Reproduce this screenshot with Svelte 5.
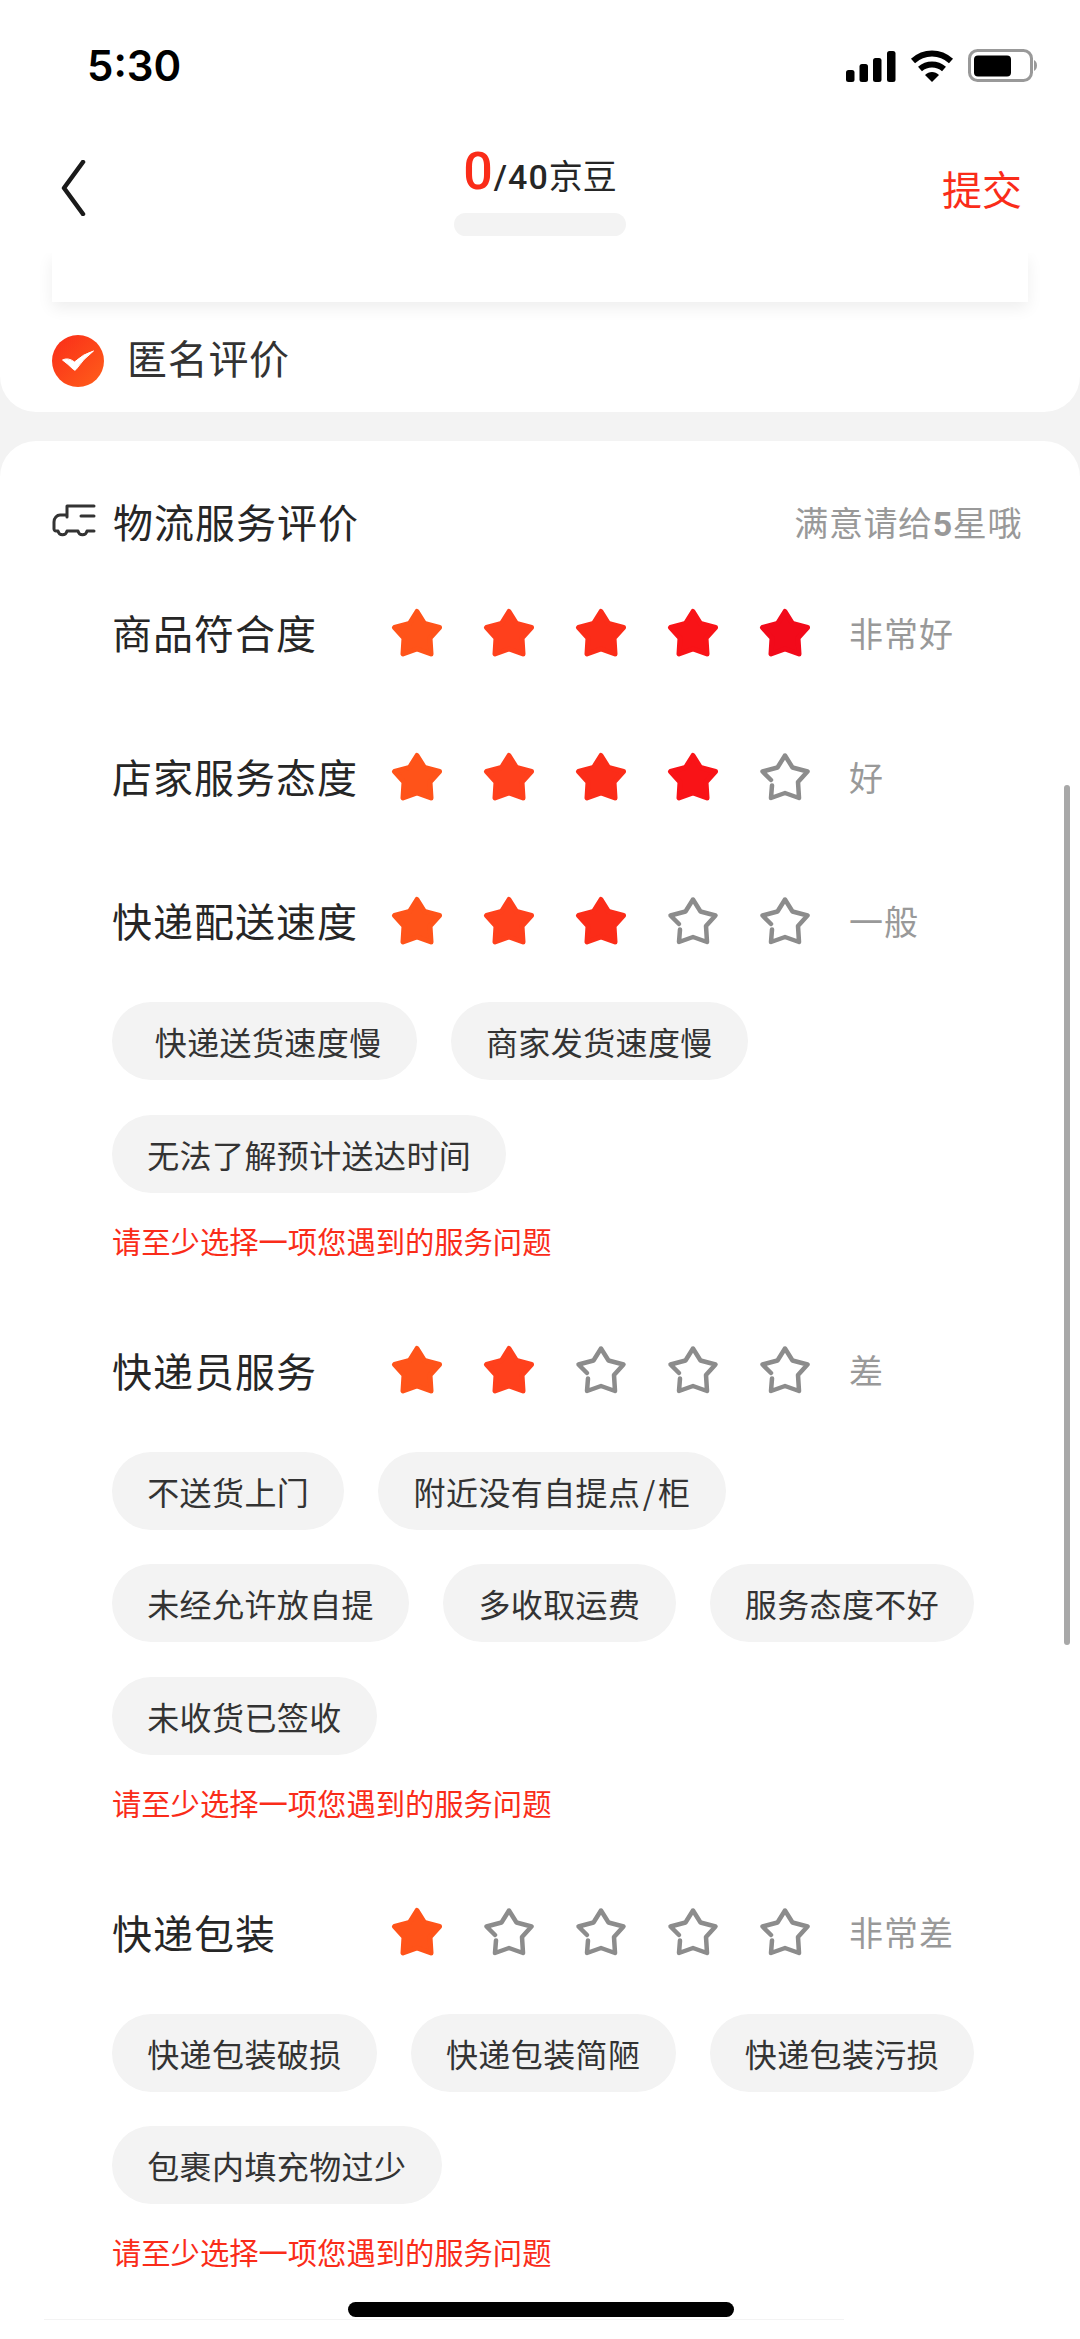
<script>
  const rows = [
    { label: "商品符合度", stars: 5, note: "非常好" },
    { label: "店家服务态度", stars: 4, note: "好" },
    {
      label: "快递配送速度",
      stars: 3,
      note: "一般",
      tags: ["\u00a0快递送货速度慢", "商家发货速度慢", "无法了解预计送达时间"],
    },
    {
      label: "快递员服务",
      stars: 2,
      note: "差",
      tags: ["不送货上门", "附近没有自提点\u200a/\u200a柜", "未经允许放自提", "多收取运费", "服务态度不好", "未收货已签收"],
    },
    {
      label: "快递包装",
      stars: 1,
      note: "非常差",
      tags: ["快递包装破损", "快递包装简陋", "快递包装污损", "包裹内填充物过少"],
    },
  ];
  const starColors = ["#ff5319", "#ff401c", "#fb2c18", "#f91317", "#f20a1a"];
  const starFilled = "M26 3.5 L33.5 15.5 L48.5 19.5 L39 30 L40 46 L26 41 L12 46 L13 30 L3.5 19.5 L18.5 15.5 Z";
  // the outline star has a small break on its lower left
  const starOutline = "M13 33.5 L12 46 L26 41 L40 46 L39 30 L48.5 19.5 L33.5 15.5 L26 3.5 L18.5 15.5 L3.5 19.5 L12 28";
</script>

<div class="page">
  <header class="top">
    <div class="status">
      <span class="time">5:30</span>
      <div class="status-icons">
        <svg width="50" height="32" viewBox="0 0 50 32">
          <rect x="0" y="20" width="8.5" height="12" rx="2.5" />
          <rect x="13.5" y="14" width="8.5" height="18" rx="2.5" />
          <rect x="27" y="8" width="8.5" height="24" rx="2.5" />
          <rect x="41" y="1" width="8.5" height="31" rx="2.5" />
        </svg>
        <svg width="44" height="34" viewBox="0 0 44 34">
          <path d="M3 12 C14 2 30 2 41 12" fill="none" stroke="#000" stroke-width="6" stroke-linejoin="round" />
          <path d="M10 20 C17 14 27 14 34 20" fill="none" stroke="#000" stroke-width="6" />
          <path d="M15 26 C19 22 25 22 29 26 L22 33 Z" />
        </svg>
        <svg width="70" height="34" viewBox="0 0 70 34">
          <rect x="1.5" y="1.5" width="62" height="30" rx="8" fill="none" stroke="#999" stroke-width="3" />
          <rect x="6" y="6.5" width="37" height="21" rx="4" />
          <path d="M66 11 C70 13 70 20 66 22 Z" fill="#999" />
        </svg>
      </div>
    </div>
    <nav class="nav">
      <svg class="back" width="26" height="56" viewBox="0 0 26 56">
        <path d="M23 2 L4 28 L23 54" fill="none" stroke="#1a1a1a" stroke-width="4.5" stroke-linecap="round" stroke-linejoin="round" />
      </svg>
      <div class="beans">
        <div class="count"><b>0</b><span class="total">/40</span><span>京豆</span></div>
        <div class="pill"></div>
      </div>
      <span class="submit">提交</span>
    </nav>
  </header>

  <section class="anon">
    <div class="goods"></div>
    <div class="anon-row">
      <svg width="52" height="52" viewBox="0 0 52 52">
        <defs>
          <linearGradient id="chk" x1="0" y1="0" x2="1" y2="1">
            <stop offset="0" stop-color="#fa2c19" />
            <stop offset="1" stop-color="#ff5f1a" />
          </linearGradient>
        </defs>
        <circle cx="26" cy="26" r="26" fill="url(#chk)" />
        <path d="M10.5 25 Q16 22 22.5 27 Q31 19 41.5 16 Q31 24 24 34.5 Q23 36 21.5 34.5 Q16 29 10.5 25 Z" fill="#fff" stroke="#fff" stroke-width="1" stroke-linejoin="round" />
      </svg>
      <span>匿名评价</span>
    </div>
  </section>

  <section class="card">
    <div class="card-head">
      <svg class="truck" width="44" height="36" viewBox="0 0 44 36" fill="none" stroke="#333" stroke-width="3" stroke-linecap="round" stroke-linejoin="round">
        <path d="M42 3 H15 V14" />
        <path d="M14 12 H8 C5 12 2 15 2 19 V26 C2 27 3 28 4 28 H6 C7 33 14 33 15 28 H26 C27 33 34 33 35 28 H42" />
        <path d="M29 13 H42" />
      </svg>
      <h2>物流服务评价</h2>
      <span class="hint">满意请给<b>5</b>星哦</span>
    </div>

    {#each rows as row}
      <div class="rate" class:has-tags={row.tags}>
        <div class="rate-row">
          <span class="label">{row.label}</span>
          <div class="stars">
            {#each starColors as color, i}
              <svg width="52" height="49" viewBox="0 0 52 49">
                {#if i < row.stars}
                  <path d={starFilled} fill={color} stroke={color} stroke-width="5" stroke-linejoin="round" />
                {:else}
                  <path d={starOutline} fill="none" stroke="#8c8c8c" stroke-width="4.5" stroke-linecap="round" stroke-linejoin="round" />
                {/if}
              </svg>
            {/each}
          </div>
          <span class="note">{row.note}</span>
        </div>
        {#if row.tags}
          <div class="tags">
            {#each row.tags as tag}
              <span class="tag">{tag}</span>
            {/each}
          </div>
          <p class="error">请至少选择一项您遇到的服务问题</p>
        {/if}
      </div>
    {/each}
    <div class="bottom-line"></div>
  </section>

  <div class="scrollbar"></div>
  <div class="home"></div>
</div>

<style>
  :global(body) {
    background: #f3f3f3;
  }

  .page {
    position: relative;
    width: 1080px;
    height: 2339px;
    overflow: hidden;
    background: #f3f3f3;
    font-family: "Noto Sans CJK SC", "Noto Sans", sans-serif;
    color: #262626;
  }

  .top {
    position: relative;
    z-index: 2;
    height: 253px;
    background: #fff;
  }

  .status {
    display: flex;
    justify-content: space-between;
    align-items: center;
    height: 60px;
    padding: 36px 42px 0 87px;
  }

  .time {
    font-family: Inter, sans-serif;
    font-size: 42px;
    font-weight: 600;
    color: #000;
    line-height: 60px;
  }

  .status-icons {
    display: flex;
    align-items: center;
    gap: 14px;
  }

  .nav {
    position: relative;
    display: flex;
    justify-content: space-between;
    align-items: flex-start;
    padding: 64px 58px 0 60px;
  }

  .beans {
    position: absolute;
    left: 454px;
    top: 47px;
    width: 172px;
    display: flex;
    flex-direction: column;
    align-items: center;
  }

  .count {
    display: flex;
    align-items: baseline;
    height: 58px;
    line-height: 58px;
    font-size: 34px;
    white-space: nowrap;
  }

  .count b {
    font-family: Roboto, sans-serif;
    font-size: 52px;
    font-weight: 500;
    color: #fa2c19;
  }

  .total {
    font-family: Roboto, sans-serif;
    font-weight: 500;
    margin-left: 1px;
    letter-spacing: 1px;
  }

  .pill {
    width: 172px;
    height: 23px;
    margin-top: 12px;
    border-radius: 12px;
    background: #f3f3f3;
  }

  .submit {
    font-size: 40px;
    line-height: 56px;
    color: #fa2c19;
  }

  .anon {
    height: 159px;
    padding: 0 52px;
    background: #fff;
    border-radius: 0 0 36px 36px;
  }

  .goods {
    height: 49px;
    background: #fff;
    box-shadow: 0 6px 16px rgba(0, 0, 0, 0.07);
  }

  .anon-row {
    display: flex;
    align-items: center;
    gap: 23px;
    margin-top: 29px;
    font-size: 40px;
    line-height: 52px;
    letter-spacing: 0.7px;
    color: #333;
  }

  .anon-row span {
    padding-bottom: 8px;
  }

  .card {
    position: relative;
    margin-top: 29px;
    height: 1900px;
    background: #fff;
    border-radius: 36px 36px 0 0;
  }

  .card-head {
    display: flex;
    align-items: center;
    height: 60px;
    padding: 50px 58px 0 52px;
  }

  .truck {
    margin-right: 17px;
  }

  h2 {
    flex: 1;
    margin: 0;
    font-size: 40px;
    font-weight: 400;
    letter-spacing: 1px;
  }

  .hint {
    font-size: 34px;
    letter-spacing: 0.6px;
    color: #999;
  }

  .hint b {
    font-family: Roboto, sans-serif;
    font-weight: 700;
  }

  .rate {
    padding: 0 0 0 112px;
    margin-top: 51px;
  }

  .rate + .rate {
    margin-top: 84px;
  }

  .rate.has-tags + .rate {
    margin-top: 80px;
  }

  .rate-row {
    display: flex;
    align-items: center;
    height: 60px;
  }

  .label {
    width: 279px;
    font-size: 40px;
    letter-spacing: 1px;
  }

  .stars {
    display: flex;
    gap: 40px;
  }

  .note {
    margin-left: 38px;
    font-size: 34px;
    letter-spacing: 1px;
    color: #999;
  }

  .tags {
    display: flex;
    flex-wrap: wrap;
    gap: 34.5px 34px;
    margin-top: 52px;
    width: 880px;
  }

  .tag {
    height: 78px;
    padding: 0 35.2px;
    border-radius: 39px;
    background: #f3f3f3;
    font-size: 32px;
    line-height: 78px;
    letter-spacing: 0.4px;
    color: #333;
    white-space: pre;
  }

  .error {
    margin: 27px 0 0;
    font-size: 29.3px;
    line-height: 40px;
    color: #fa2c19;
  }

  .bottom-line {
    position: absolute;
    left: 44px;
    top: 1878px;
    width: 800px;
    height: 1px;
    background: #f3f3f3;
  }

  .scrollbar {
    position: absolute;
    left: 1064px;
    top: 785px;
    width: 6px;
    height: 860px;
    border-radius: 3px;
    background: #a8a8a8;
  }

  .home {
    position: absolute;
    left: 348px;
    top: 2302px;
    width: 386px;
    height: 15px;
    border-radius: 8px;
    background: #000;
  }
</style>
